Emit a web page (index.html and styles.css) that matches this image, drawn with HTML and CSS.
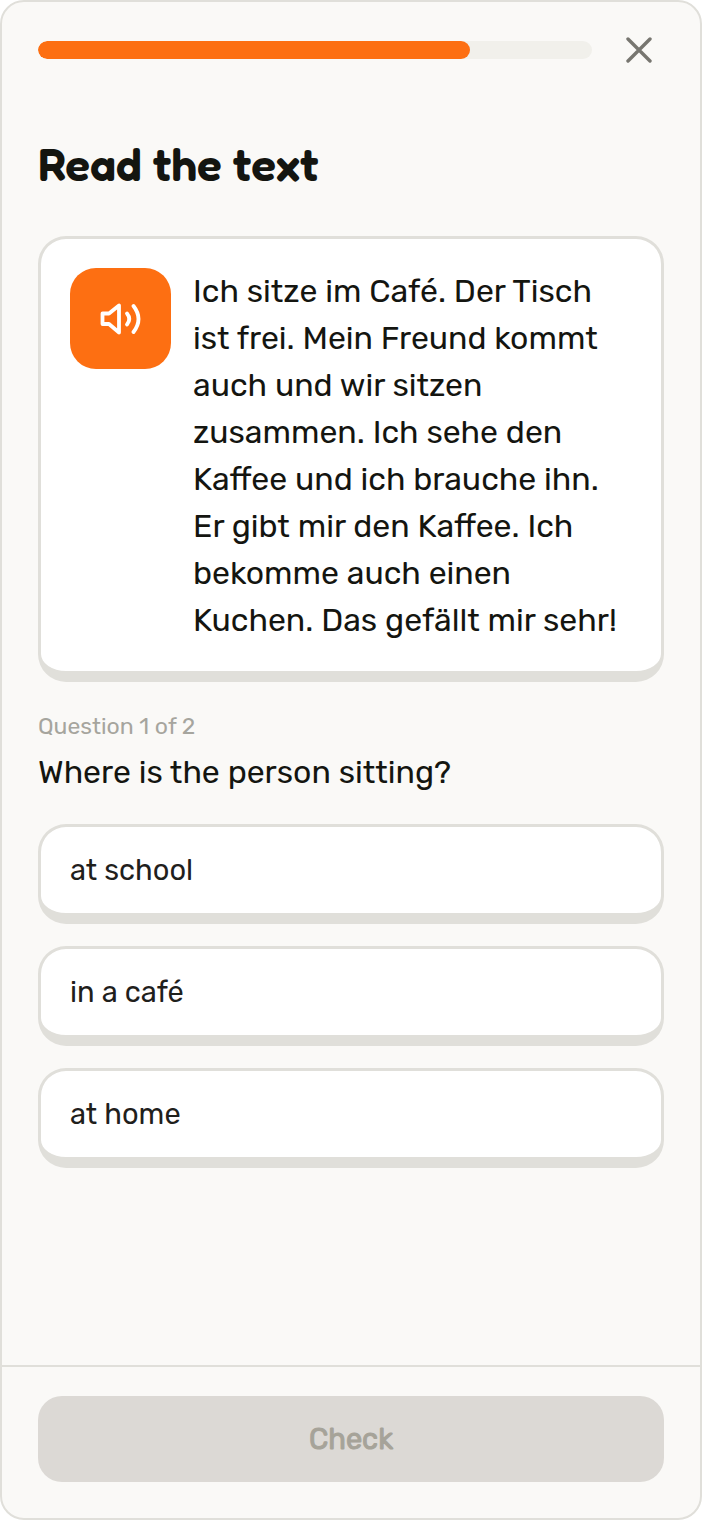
FILE: index.html
```html
<!DOCTYPE html>
<html lang="en">
<head>
  <meta charset="UTF-8">
  <meta name="viewport" content="width=device-width, initial-scale=1.0">
  <title>Read the text</title>
  <link rel="stylesheet" href="styles.css">
</head>
<body>
  <div class="screen">
    <header class="topbar">
      <div class="progress" role="progressbar" aria-label="Lesson progress" aria-valuenow="78" aria-valuemin="0" aria-valuemax="100">
        <div class="progress-fill" style="width: 78%"></div>
      </div>
      <button class="close" type="button" aria-label="Close">
        <svg viewBox="0 0 26 26" width="26" height="26" fill="none" stroke="currentColor" stroke-width="3.4" stroke-linecap="round">
          <path d="M2 2l22 22M24 2L2 24"/>
        </svg>
      </button>
    </header>

    <main class="content">
      <h1>Read the text</h1>

      <section class="card">
        <button class="listen" type="button" aria-label="Listen">
          <svg viewBox="0 0 42 32" width="42" height="32" fill="none" stroke="currentColor" stroke-width="3.8" stroke-linecap="round" stroke-linejoin="round">
            <path d="M2.500 10.500h6.500l10-8v27l-10-8.500H2.500z"/>
            <path d="M27 10.500q4.500 5.500 0 11"/>
            <path d="M33.500 3q10 13 0 26"/>
          </svg>
        </button>
        <p class="text" lang="de">Ich sitze im Café. Der Tisch ist frei. Mein Freund kommt auch und wir sitzen zusammen. Ich sehe den Kaffee und ich brauche ihn. Er gibt mir den Kaffee. Ich bekomme auch einen Kuchen. Das gefällt mir sehr!</p>
      </section>

      <p class="step">Question 1 of 2</p>
      <h2>Where is the person sitting?</h2>

      <div class="options">
        <button class="option" type="button">at school</button>
        <button class="option" type="button">in a café</button>
        <button class="option" type="button">at home</button>
      </div>
    </main>

    <footer class="footer">
      <button class="check" type="button" disabled>Check</button>
    </footer>
  </div>
</body>
</html>
```
FILE: styles.css
```css
* { box-sizing: border-box; }
body {
  margin: 0;
  background-color: #fff;
  color: #141510;
  font-family: Rubik, Roboto, sans-serif;
}
h1, h2, p {
  margin: 0;
}
button {
  font-family: inherit;
  border: none;
  cursor: pointer;
}
svg {
  display: block;
}
.screen {
  display: flex;
  flex-direction: column;
  min-height: 100vh;
  background-color: #faf9f7;
  border: 2px solid #e0dfda;
  border-radius: 24px;
}
.topbar {
  display: flex;
  align-items: center;
  gap: 24px;
  padding: 23px 36px 0;
}
.progress {
  flex: 1;
  height: 18px;
  background-color: #f1f0eb;
  border-radius: 9px;
  overflow: hidden;
}
.progress-fill {
  height: 100%;
  background-color: #fd6f12;
  border-radius: 9px;
}
.close {
  padding: 12px 10px;
  margin-right: 2px;
  background: none;
  color: #777670;
}
.content {
  flex: 1;
  padding: 61px 36px 36px;
}
h1 {
  font-family: Fredoka, Lato, sans-serif;
  font-size: 46px;
  font-weight: 600;
  line-height: 56px;
  margin-bottom: 44px;
}
.card {
  display: flex;
  align-items: flex-start;
  gap: 22px;
  padding: 29px 29px 27px;
  background-color: #fff;
  border: 3px solid #e0dfda;
  border-bottom-width: 11px;
  border-radius: 28px;
}
.listen {
  display: flex;
  align-items: center;
  justify-content: center;
  flex: none;
  width: 101px;
  height: 101px;
  padding: 0;
  background-color: #fd6f12;
  color: #fff;
  border-radius: 26px;
}
.text {
  font-size: 32px;
  line-height: 47px;
}
.step {
  margin-top: 29px;
  font-size: 23px;
  line-height: 30px;
  color: #a6a59e;
}
h2 {
  margin-top: 8px;
  font-size: 32px;
  font-weight: 400;
  line-height: 47px;
}
.options {
  display: flex;
  flex-direction: column;
  gap: 22px;
  margin-top: 28px;
}
.option {
  height: 100px;
  padding: 0 29px;
  background-color: #fff;
  border: 3px solid #e0dfda;
  border-bottom-width: 11px;
  border-radius: 28px;
  color: #1f201c;
  font-size: 29px;
  text-align: left;
}
.footer {
  padding: 29px 36px 36px;
  border-top: 2px solid #e0dfda;
}
.check {
  width: 100%;
  height: 86px;
  background-color: #dcd9d5;
  color: #a6a399;
  border-radius: 24px;
  font-size: 29px;
  font-weight: 400;
  -webkit-text-stroke: 1px currentColor;
}
```
